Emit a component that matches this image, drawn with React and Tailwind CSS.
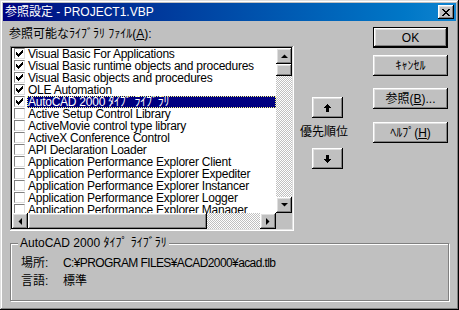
import React from "react";

const items = [
  { name: "Visual Basic For Applications", checked: true },
  { name: "Visual Basic runtime objects and procedures", checked: true },
  { name: "Visual Basic objects and procedures", checked: true },
  { name: "OLE Automation", checked: true },
  { name: "AutoCAD 2000 ﾀｲﾌﾟ ﾗｲﾌﾞﾗﾘ", checked: true, selected: true },
  { name: "Active Setup Control Library" },
  { name: "ActiveMovie control type library" },
  { name: "ActiveX Conference Control" },
  { name: "API Declaration Loader" },
  { name: "Application Performance Explorer Client" },
  { name: "Application Performance Explorer Expediter" },
  { name: "Application Performance Explorer Instancer" },
  { name: "Application Performance Explorer Logger" },
  { name: "Application Performance Explorer Manager" },
];

const raised =
  "bg-[#c0c0c0] shadow-[inset_-1px_-1px_#000,inset_1px_1px_#fff,inset_-2px_-2px_#808080,inset_2px_2px_#dfdfdf]";
const checker =
  "bg-[image:repeating-conic-gradient(#c0c0c0_0%_25%,#fff_0%_50%)] bg-[length:2px_2px]";

function Check() {
  // classic 7x7 pixel check mark
  const cols = [2, 3, 4, 3, 2, 1, 0];
  return (
    <svg width="7" height="7" viewBox="0 0 7 7" shapeRendering="crispEdges">
      {cols.map((y, x) => (
        <rect key={x} x={x} y={y} width="1" height="3" fill="#000" />
      ))}
    </svg>
  );
}

function Arrow({ dir }) {
  const pts = {
    up: "0,4 3.5,0.5 7,4",
    down: "0,0 7,0 3.5,3.5",
    left: "4,0 4,7 0.5,3.5",
    right: "0,0 0,7 3.5,3.5",
  }[dir];
  const vertical = dir === "up" || dir === "down";
  return (
    <svg width={vertical ? 7 : 4} height={vertical ? 4 : 7} viewBox={vertical ? "0 0 7 4" : "0 0 4 7"}>
      <polygon points={pts} fill="#000" />
    </svg>
  );
}

function ScrollBtn({ dir }) {
  return (
    <div className={`w-[16px] h-[16px] shrink-0 flex items-center justify-center ${raised}`}>
      <Arrow dir={dir} />
    </div>
  );
}

function Button({ children, isDefault }) {
  const cls = isDefault
    ? "bg-[#c0c0c0] shadow-[inset_0_0_0_1px_#000,inset_-2px_-2px_#000,inset_2px_2px_#fff,inset_-3px_-3px_#808080,inset_3px_3px_#dfdfdf]"
    : raised;
  return (
    <div className={`w-[75px] h-[21px] flex items-center justify-center text-[12px] leading-[12px] ${cls}`}>
      {children}
    </div>
  );
}

function PriorityArrow({ up }) {
  return (
    <div className={`w-[31px] h-[21px] flex items-center justify-center ${raised}`}>
      <svg width="7" height="8" viewBox="0 0 7 8" shapeRendering="crispEdges">
        {up ? (
          <polygon points="3.5,0 7,4 5,4 5,8 2,8 2,4 0,4" fill="#000" />
        ) : (
          <polygon points="2,0 5,0 5,4 7,4 3.5,8 0,4 2,4" fill="#000" />
        )}
      </svg>
    </div>
  );
}

export default function App() {
  return (
    <div className="w-[459px] h-[310px] bg-[#c0c0c0] p-[3px] text-black font-['Liberation_Sans','Noto_Sans_CJK_JP',sans-serif] shadow-[inset_-1px_-1px_#000,inset_1px_1px_#dfdfdf,inset_-2px_-2px_#808080,inset_2px_2px_#fff] overflow-hidden">
      {/* title bar */}
      <div className="h-[18px] flex items-center justify-between pl-[2px] pr-[2px] bg-gradient-to-r from-[#000080] to-[#1084d0]">
        <span className="text-white text-[12px] leading-[12px]">参照設定 - PROJECT1.VBP</span>
        <div className={`w-[16px] h-[14px] flex items-center justify-center ${raised}`}>
          <svg width="8" height="7" viewBox="0 0 8 7" shapeRendering="crispEdges">
            <path d="M0 0h2v1H0zM6 0h2v1H6zM1 1h2v1H1zM5 1h2v1H5zM2 2h4v1H2zM3 3h2v1H3zM2 4h4v1H2zM1 5h2v1H1zM5 5h2v1H5zM0 6h2v1H0zM6 6h2v1H6z" fill="#000" />
          </svg>
        </div>
      </div>

      <div className="flex">
        {/* left: library list */}
        <div className="ml-[7px] mt-[7px] w-[284px]">
          <div className="text-[12px] leading-[12px] -ml-[1px]">
            参照可能なﾗｲﾌﾞﾗﾘ ﾌｧｲﾙ(<span className="underline">A</span>):
          </div>
          <div className="mt-[6px] h-[185px] p-[2px] bg-white shadow-[inset_-1px_-1px_#fff,inset_1px_1px_#808080,inset_-2px_-2px_#dfdfdf,inset_2px_2px_#000]">
            <div className="flex h-[165px]">
              <div className="flex-1 overflow-hidden bg-white">
                {items.map((it) => (
                  <div key={it.name} className="flex items-start h-[12px] text-[12px] leading-[12px] tracking-[-0.25px]">
                    <div className="ml-[2px] mr-[2px] w-[11px] h-[11px] shrink-0 bg-white border border-t-[#808080] border-l-[#808080] border-r-[#dfdfdf] border-b-[#dfdfdf] flex items-center justify-center">
                      {it.checked && <Check />}
                    </div>
                    <div
                      className={`flex-1 h-[12px] pl-[1px] whitespace-nowrap ${
                        it.selected ? "bg-[#000080] text-white outline outline-1 outline-dotted outline-[#ffff80] -outline-offset-1" : ""
                      }`}
                    >
                      {it.name}
                    </div>
                  </div>
                ))}
              </div>
              <div className={`w-[16px] flex flex-col ${checker}`}>
                <ScrollBtn dir="up" />
                <div className={`h-[12px] ${raised}`} />
                <div className="flex-1" />
                <ScrollBtn dir="down" />
              </div>
            </div>
            <div className="flex h-[16px]">
              <div className={`flex-1 flex ${checker}`}>
                <ScrollBtn dir="left" />
                <div className={`w-[179px] ${raised}`} />
                <div className="flex-1" />
                <ScrollBtn dir="right" />
              </div>
              <div className="w-[16px] bg-[#c0c0c0]" />
            </div>
          </div>
        </div>

        {/* middle: priority */}
        <div className="ml-[6px] w-[48px] flex flex-col mt-[76px]">
          <div className="ml-[12px]">
            <PriorityArrow up />
          </div>
          <div className="mt-[8px] text-[12px] leading-[12px] whitespace-nowrap">優先順位</div>
          <div className="ml-[12px] mt-[10px]">
            <PriorityArrow />
          </div>
        </div>

        {/* right: buttons */}
        <div className="ml-[25px] mt-[6px] flex flex-col">
          <Button isDefault>OK</Button>
          <div className="mt-[7px]">
            <Button>ｷｬﾝｾﾙ</Button>
          </div>
          <div className="mt-[12px]">
            <Button>
              参照(<span className="underline">B</span>)...
            </Button>
          </div>
          <div className="mt-[13px]">
            <Button>
              ﾍﾙﾌﾟ(<span className="underline">H</span>)
            </Button>
          </div>
        </div>
      </div>

      {/* bottom group box */}
      <div className="relative ml-[7px] mt-[12px] w-[439px] h-[58px] border border-[#808080] shadow-[1px_1px_#fff,inset_1px_1px_#fff]">
        <div className="absolute left-[7px] -top-[7px] px-[2px] bg-[#c0c0c0] text-[12px] leading-[12px] whitespace-nowrap">
          AutoCAD 2000 ﾀｲﾌﾟ ﾗｲﾌﾞﾗﾘ
        </div>
        <div className="pl-[10px] pt-[13px] text-[12px] leading-[12px]">
          <div className="flex">
            <span className="w-[42px]">場所:</span>
            <span className="whitespace-nowrap tracking-[-0.6px]">C:¥PROGRAM FILES¥ACAD2000¥acad.tlb</span>
          </div>
          <div className="flex mt-[6px]">
            <span className="w-[42px]">言語:</span>
            <span>標準</span>
          </div>
        </div>
      </div>
    </div>
  );
}
